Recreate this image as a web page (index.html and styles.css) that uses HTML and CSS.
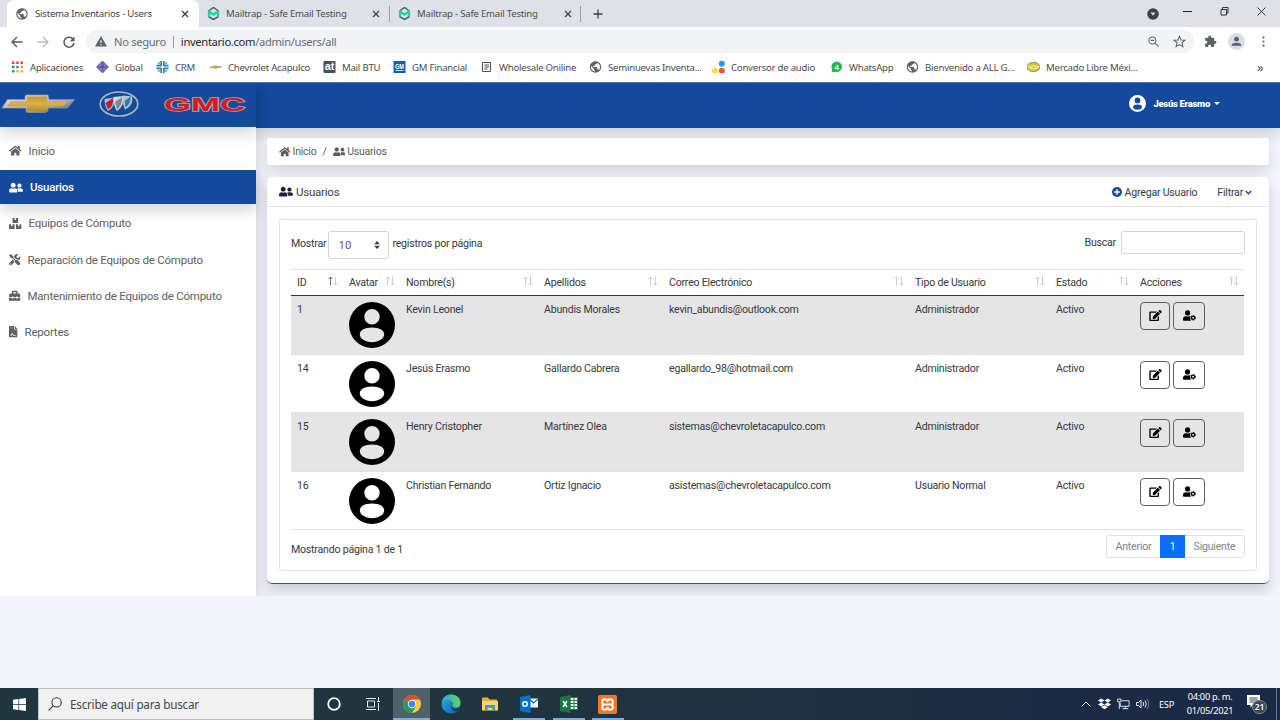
FILE: index.html
```html
<!DOCTYPE html>
<html lang="es">
<head>
<meta charset="utf-8">
<title>Sistema Inventarios - Users</title>
<link rel="stylesheet" href="styles.css">
</head>
<body>
<svg class="defs" aria-hidden="true">
<defs>
<linearGradient id="gold" x1="0" y1="0" x2="0" y2="1"><stop offset="0" stop-color="#c79a35"/><stop offset=".5" stop-color="#d9b04c"/><stop offset="1" stop-color="#b98c2c"/></linearGradient>
<linearGradient id="silver" x1="0" y1="0" x2="1" y2="1"><stop offset="0" stop-color="#e8eaec"/><stop offset=".6" stop-color="#a9afb5"/><stop offset="1" stop-color="#4c535c"/></linearGradient>
<linearGradient id="edge" x1="0" y1="0" x2="1" y2="1"><stop offset="0" stop-color="#2fb4e8"/><stop offset="1" stop-color="#0a55ad"/></linearGradient>
<linearGradient id="edgetop" x1="0" y1="0" x2="1" y2="0"><stop offset="0" stop-color="#2aa9e0"/><stop offset="1" stop-color="#62d35b"/></linearGradient>
</defs>
<symbol id="home" viewBox="0 0 576 512"><path d="M280.37 148.26L96 300.11V464a16 16 0 0 0 16 16l112.06-.29a16 16 0 0 0 15.92-16V368a16 16 0 0 1 16-16h64a16 16 0 0 1 16 16v95.64a16 16 0 0 0 16 16.05L464 480a16 16 0 0 0 16-16V300L295.67 148.26a12.19 12.19 0 0 0-15.3 0zM571.6 251.47L488 182.56V44.05a12 12 0 0 0-12-12h-56a12 12 0 0 0-12 12v72.61L318.47 43a48 48 0 0 0-61 0L4.34 251.47a12 12 0 0 0-1.6 16.9l25.5 31A12 12 0 0 0 45.15 301l235.22-193.74a12.19 12.19 0 0 1 15.3 0L530.9 301a12 12 0 0 0 16.9-1.6l25.5-31a12 12 0 0 0-1.7-16.93z"/></symbol>
<symbol id="users" viewBox="0 0 640 512"><path d="M192 256c61.9 0 112-50.1 112-112S253.9 32 192 32 80 82.1 80 144s50.1 112 112 112zm76.8 32h-8.3c-20.8 10-43.9 16-68.5 16s-47.6-6-68.5-16h-8.3C51.6 288 0 339.6 0 403.2V432c0 26.5 21.5 48 48 48h288c26.5 0 48-21.5 48-48v-28.8c0-63.6-51.6-115.2-115.2-115.2zM480 256c53 0 96-43 96-96s-43-96-96-96-96 43-96 96 43 96 96 96zm48 32h-3.8c-13.9 4.8-28.6 8-44.2 8s-30.3-3.2-44.2-8H432c-20.4 0-39.2 5.9-55.7 15.4 24.4 26.3 39.7 61.2 39.7 99.8v38.4c0 2.2-.5 4.3-.6 6.4H592c26.5 0 48-21.5 48-48 0-61.9-50.1-112-112-112z"/></symbol>
<symbol id="boxes" viewBox="0 0 576 512"><path d="M560 288h-80v96l-32-21.3-32 21.3v-96h-80c-8.8 0-16 7.2-16 16v192c0 8.8 7.2 16 16 16h224c8.8 0 16-7.2 16-16V304c0-8.8-7.2-16-16-16zm-384-64h224c8.8 0 16-7.2 16-16V16c0-8.8-7.2-16-16-16h-80v96l-32-21.3L256 96V0h-80c-8.8 0-16 7.2-16 16v192c0 8.8 7.2 16 16 16zm64 64h-80v96l-32-21.3L96 384v-96H16c-8.8 0-16 7.2-16 16v192c0 8.8 7.2 16 16 16h224c8.8 0 16-7.2 16-16V304c0-8.8-7.2-16-16-16z"/></symbol>
<symbol id="tools" viewBox="0 0 512 512"><path d="M501.1 395.7L384 278.6c-23.1-23.1-57.6-27.6-85.4-13.9L192 158.1V96L64 0 0 64l96 128h62.1l106.6 106.6c-13.6 27.8-9.2 62.3 13.9 85.4l117.1 117.1c14.6 14.6 38.2 14.6 52.7 0l52.7-52.7c14.5-14.6 14.5-38.2 0-52.7zM331.7 225c28.3 0 54.9 11 74.9 31l19.4 19.4c15.8-6.9 30.8-16.5 43.8-29.5 37.1-37.1 49.7-89.3 37.9-136.7-2.2-9-13.5-12.1-20.1-5.5l-74.4 74.4-67.9-11.3L334 98.900l74.400-74.400c6.600-6.600 3.400-17.900-5.700-20.200-47.400-11.700-99.600.900-136.600 37.900-28.500 28.500-41.900 66.100-41.200 103.600l82.100 82.100c8.100-1.900 16.500-2.900 24.700-2.900zm-103.900 82l-56.700-56.700L18.700 402.800c-25 25-25 65.500 0 90.500s65.500 25 90.500 0l123.600-123.600c-7.600-19.900-9.900-41.600-5-62.700zM64 472c-13.200 0-24-10.800-24-24 0-13.300 10.700-24 24-24s24 10.700 24 24c0 13.200-10.700 24-24 24z"/></symbol>
<symbol id="toolbox" viewBox="0 0 512 512"><path d="M502.63 214.63l-45.25-45.25c-6-6-14.14-9.37-22.63-9.37H384V80c0-26.51-21.49-48-48-48H176c-26.51 0-48 21.49-48 48v80H77.25c-8.49 0-16.62 3.37-22.63 9.37L9.37 214.63c-6 6-9.37 14.14-9.37 22.63V320h128v-16c0-8.84 7.16-16 16-16h32c8.84 0 16 7.16 16 16v16h128v-16c0-8.84 7.16-16 16-16h32c8.84 0 16 7.16 16 16v16h128v-82.75c0-8.48-3.37-16.62-9.37-22.62zM320 160H192V96h128v64zm64 208c0 8.84-7.16 16-16 16h-32c-8.84 0-16-7.16-16-16v-16H192v16c0 8.84-7.16 16-16 16h-32c-8.84 0-16-7.16-16-16v-16H0v96c0 17.67 14.33 32 32 32h448c17.67 0 32-14.33 32-32v-96H384v16z"/></symbol>
<symbol id="report" viewBox="0 0 384 512"><path fill-rule="evenodd" d="M24 0h200v136c0 13 11 24 24 24h136v328c0 13-11 24-24 24H24c-13 0-24-11-24-24V24C0 11 11 0 24 0zM256 0l128 128H256zM64 72v32h80V72zM64 408v32h50l40-60 24 46c8 16 32 16 42 2 10 10 20 12 46 12h54v-32h-64c-20-4-20-22-44-22-14 0-20 4-26 6l-26-62c-6-18-28-18-36 0l-40 78z"/></symbol>
<symbol id="edit" viewBox="0 0 576 512"><path d="M402.6 83.2l90.2 90.2c3.8 3.8 3.8 10 0 13.8L274.4 405.6l-92.8 10.3c-12.4 1.4-22.9-9.1-21.5-21.5l10.3-92.8L388.8 83.2c3.8-3.8 10-3.8 13.8 0zm162-22.9l-48.8-48.8c-15.2-15.2-39.9-15.2-55.2 0l-35.4 35.4c-3.8 3.8-3.8 10 0 13.8l90.2 90.2c3.8 3.8 10 3.8 13.8 0l35.4-35.4c15.2-15.3 15.2-40 0-55.2zM384 346.2V448H64V128h229.8c3.2 0 6.2-1.3 8.5-3.5l40-40c7.6-7.6 2.2-20.5-8.5-20.5H48C21.5 64 0 85.5 0 112v352c0 26.5 21.5 48 48 48h352c26.5 0 48-21.5 48-48V306.2c0-10.7-12.9-16-20.5-8.5l-40 40c-2.2 2.3-3.5 5.3-3.5 8.5z"/></symbol>
<symbol id="usercog" viewBox="0 0 640 512"><circle cx="224" cy="128" r="128"/><path d="M134 288C60 288 0 348 0 422v42c0 27 22 48 48 48h350c-30-30-50-70-48-120 0-30 8-60 26-88-18-10-40-16-62-16h-17c-46 21-100 21-146 0z"/><circle cx="497" cy="368" r="76" fill="none" stroke="currentColor" stroke-width="62"/><circle cx="497" cy="368" r="116" fill="none" stroke="currentColor" stroke-width="44" stroke-dasharray="61 60.5"/></symbol>
<symbol id="avatar" viewBox="0 0 46 46"><path fill-rule="evenodd" d="M23 0a23 23 0 1 0 0 46 23 23 0 0 0 0-46zM23 7a7.700 7.700 0 1 1 0 15.400 7.700 7.700 0 0 1 0-15.400zM23 25.500c8 0 12.200 3 12.200 7 0 3.900-5.400 7.700-12.200 7.700S10.800 36.400 10.800 32.500c0-4 4.200-7 12.200-7z"/></symbol>
<symbol id="globe" viewBox="1.500 1.500 21 21"><path fill="#5f6368" d="M12 2C6.480 2 2 6.480 2 12s4.480 10 10 10 10-4.480 10-10S17.520 2 12 2zm-1 17.930c-3.950-.49-7-3.850-7-7.930 0-.62.08-1.210.21-1.790L9 15v1c0 1.100.9 2 2 2v1.930zm6.900-2.540c-.26-.81-1-1.390-1.900-1.390h-1v-3c0-.55-.45-1-1-1H8v-2h2c.55 0 1-.45 1-1V7h2c1.100 0 2-.9 2-2v-.41c2.930 1.190 5 4.060 5 7.410 0 2.080-.8 3.970-2.100 5.390z"/></symbol>
<symbol id="mailtrap" viewBox="0 0 26 26"><path d="M3 8L13 1l10 7M3 19l10 6 10-6" fill="none" stroke="#4e5f73" stroke-width="3"/><path d="M4 19V9l9 6 9-6v10" fill="none" stroke="#25d0a1" stroke-width="4.500" stroke-linejoin="round"/></symbol>
<symbol id="close" viewBox="0 0 8 8"><path d="M1 1l6 6M7 1L1 7" fill="none" stroke="currentColor" stroke-width="1.300"/></symbol>
<symbol id="bowtie" viewBox="0 0 74 20"><path d="M6.500 5.500H24V2.500q0-1.500 2-1.500H47l1 4.500H73.500L66.500 14H47v2.500q-1 2-3 2H27q-2 0-2-2V14H1z" fill="url(#silver)" stroke="#9a9583" stroke-width=".7"/><path d="M10 7.300H26V2.500H46V7.300H67L62 12.300H45.500V17H26V12.300H5.500z" fill="url(#gold)"/></symbol>
<symbol id="sort" viewBox="0 0 10 10"><path d="M7.500 .5V9M5.500 7l2 2 2-2M2.500 9.500V1M.5 3l2-2 2 2" fill="none"/></symbol>
<symbol id="sortasc" viewBox="0 0 10 10"><path d="M7.500 .5V9M5.500 7l2 2 2-2" fill="none"/><path d="M2.500 9.500V1M.5 3l2-2 2 2" fill="none" stroke="#55595d"/></symbol>
</svg>

<header class="tabs">
  <div class="tab active"><svg class="i12"><use href="#globe"/></svg><span>Sistema Inventarios - Users</span><svg class="x"><use href="#close"/></svg></div>
  <div class="tab"><svg class="i13"><use href="#mailtrap"/></svg><span>Mailtrap - Safe Email Testing</span><svg class="x"><use href="#close"/></svg></div>
  <div class="tab"><svg class="i13"><use href="#mailtrap"/></svg><span>Mailtrap - Safe Email Testing</span><svg class="x"><use href="#close"/></svg></div>
  <svg class="plus" viewBox="0 0 10 10"><path d="M5 .5v9M.5 5h9" stroke="#3c4043" stroke-width="1.300"/></svg>
  <div class="winctl">
    <svg class="i12" viewBox="0 0 12 12"><circle cx="6" cy="6" r="5.800" fill="#3c4043"/><path d="M3.500 4.500h5L6 7.700z" fill="#dee1e6"/></svg>
    <svg class="wb" viewBox="0 0 9 9"><path d="M0 4.500h9" stroke="#222" /></svg>
    <svg class="wb" viewBox="0 0 9 9"><path d="M1 2.500h5.500v5.500H1zM2.500 2.500v-2H8v5.500H6.500" fill="none" stroke="#222" stroke-width=".9"/></svg>
    <svg class="wb" viewBox="0 0 9 9"><path d="M.5.500l8 8M8.500.500l-8 8" stroke="#222" stroke-width=".9"/></svg>
  </div>
</header>

<div class="toolbar">
  <svg class="nav" viewBox="0 0 12 12"><path d="M11.500 6H1M6 1L1 6l5 5" fill="none" stroke="#55595d" stroke-width="1.400"/></svg>
  <svg class="nav" viewBox="0 0 12 12"><path d="M.5 6H11M6 1l5 5-5 5" fill="none" stroke="#b9bcbf" stroke-width="1.400"/></svg>
  <svg class="nav" viewBox="0 0 12 12"><path d="M10.300 3.500A5 5 0 1 0 11 7" fill="none" stroke="#55595d" stroke-width="1.500"/><path d="M11.500.500v4.700H6.800z" fill="#55595d"/></svg>
  <div class="omnibox">
    <svg class="warn" viewBox="0 0 12 11"><path d="M6 0l6 10.500H0z" fill="#5f6368"/><path d="M6 4v3M6 8v1.200" stroke="#f1f3f4" stroke-width="1.100"/></svg>
    <span class="insecure">No seguro</span><span class="url"><b>inventario.com</b>/admin/users/all</span>
    <svg class="mag" viewBox="0 0 12 12"><circle cx="4.800" cy="4.800" r="3.800" fill="none" stroke="#5f6368" stroke-width="1.100"/><path d="M3 4.800h3.600M7.800 7.800l3.700 3.700" stroke="#5f6368" stroke-width="1.200"/></svg>
    <svg class="star" viewBox="0 0 24 24"><path d="M12 2.500l2.900 6.600 7.100.6-5.400 4.700 1.600 7-6.200-3.700-6.200 3.700 1.600-7L2 9.700l7.100-.6z" fill="none" stroke="#5f6368" stroke-width="2"/></svg>
  </div>
  <svg class="puzzle" viewBox="0 0 24 24"><path fill="#5f6368" d="M20.500 11H19V7a2 2 0 0 0-2-2h-4V3.500a2.500 2.500 0 0 0-5 0V5H4a2 2 0 0 0-2 2v3.800h1.500a2.700 2.700 0 0 1 0 5.400H2V20c0 1.100.9 2 2 2h3.800v-1.500a2.700 2.700 0 0 1 5.400 0V22H17a2 2 0 0 0 2-2v-4h1.500a2.500 2.500 0 0 0 0-5z"/></svg>
  <svg class="prof" viewBox="0 0 18 18"><circle cx="9" cy="9" r="9" fill="#d9dde4"/><circle cx="9" cy="6.500" r="2.600" fill="#56627a"/><path d="M4 13.500v-1c0-3 10-3 10 0v1z" fill="#56627a"/></svg>
  <svg class="dots" viewBox="0 0 3 12"><g fill="#5f6368"><circle cx="1.500" cy="1.500" r="1.200"/><circle cx="1.500" cy="6" r="1.200"/><circle cx="1.500" cy="10.500" r="1.200"/></g></svg>
</div>

<nav class="bookmarks">
  <div><svg viewBox="0 0 12 12"><g><path d="M.5.500h2.500v2.500H.5zM4.700.500h2.500v2.500H4.700zM9 .5h2.500v2.500H9z" fill="#e0463a"/><path d="M.5 4.800h2.500v2.500H.5z" fill="#2a9d4a"/><path d="M4.700 4.800h2.500v2.500H4.700z" fill="#3f79e0"/><path d="M9 4.800h2.500v2.500H9z" fill="#e9a820"/><path d="M.5 9h2.500v2.500H.5z" fill="#2a9d4a"/><path d="M4.700 9h2.500v2.500H4.700zM9 9h2.500v2.500H9z" fill="#e9b53a"/></g></svg><span>Aplicaciones</span></div>
  <div><svg viewBox="0 0 12 12"><path d="M6-.5L12.500 6 6 12.500-.5 6z" fill="#6b66b5"/><path d="M3 3.500l5.500 5.500M9 3.500L3.500 9" stroke="#b9b6e0" stroke-width=".7"/><path d="M6 4l2 2-2 2-2-2z" fill="#4f4a9c"/></svg><span>Global</span></div>
  <div><svg viewBox="0 0 12 12"><g fill="#317fa6"><path d="M3.800 0h1.700v5H3.800zM6.500 0h1.700v5H6.500zM3.800 7h1.700v5H3.800zM6.500 7h1.700v5H6.500zM0 3.800h5v1.700H0zM0 6.500h5v1.700H0zM7 3.800h5v1.700H7zM7 6.500h5v1.700H7z"/><path d="M1.300 1.300h2v2h-2zM8.700 1.300h2v2h-2zM1.300 8.700h2v2h-2zM8.700 8.700h2v2h-2z" opacity=".7"/></g></svg><span>CRM</span></div>
  <div><svg viewBox="0 0 74 20"><use href="#bowtie"/></svg><span>Chevrolet Acapulco</span></div>
  <div><svg viewBox="0 0 12 12"><rect width="12" height="12" rx="1" fill="#43505a"/><text x="1.200" y="9.300" font-size="10" font-weight="700" fill="#fff" textLength="9.600" lengthAdjust="spacingAndGlyphs">at</text></svg><span>Mail BTU</span></div>
  <div><svg viewBox="0 0 12 12"><rect width="12" height="12" fill="#1361ae"/><text x="1.500" y="8" font-size="7" font-weight="700" fill="#fff" textLength="9" lengthAdjust="spacingAndGlyphs">GM</text><path d="M2 9.500h8" stroke="#fff" stroke-width=".8"/></svg><span>GM Financial</span></div>
  <div><svg viewBox="0 0 12 12"><path d="M2 1.500h8v9H2zM4 4h4.500M4 6h4.500M4 8h3" fill="none" stroke="#4a4d51"/></svg><span>Wholesale Oniline</span></div>
  <div><svg viewBox="0 0 12 12"><use href="#globe"/></svg><span>Seminuevas Inventa...</span></div>
  <div><svg viewBox="0 0 12 12"><circle cx="9.300" cy="2.700" r="3" fill="#1b9fe0"/><circle cx="2.500" cy="9.700" r="2.900" fill="#f9d949"/><circle cx="9.300" cy="9.700" r="3" fill="#ef5a33"/></svg><span>Conversor de audio</span></div>
  <div><svg viewBox="0 0 12 12"><circle cx="6.200" cy="5.800" r="5.300" fill="#1fba4c"/><path d="M1 11.500l1-4 3 3z" fill="#1fba4c"/><text x="4" y="8.800" font-size="8" font-weight="700" fill="#fff">4</text></svg><span>WhatsApp</span></div>
  <div><svg viewBox="0 0 12 12"><use href="#globe"/></svg><span>Bienvenido a ALL G...</span></div>
  <div><svg viewBox="0 0 12 12"><ellipse cx="6" cy="6" rx="6.500" ry="4.600" fill="#d9c63a" stroke="#82783b" stroke-width=".8"/><path d="M0 5.500q3 2 6-1 3 3 6 1M3 8q2-1.500 3 0 1.500-1.500 3-.5" fill="none" stroke="#fff" stroke-width=".8"/></svg><span>Mercado Libre Méxi...</span></div>
  <div class="more">»</div>
</nav>

<div class="app">
  <aside class="sidebar">
    <div class="brand">
      <svg class="chevy"><use href="#bowtie"/></svg>
      <svg class="buick" viewBox="0 0 40 26"><ellipse cx="20" cy="13" rx="18.800" ry="12" fill="none" stroke="#aeb6c2" stroke-width="1.600"/><path d="M5.500 8l10-1.500c1 6-2 11-6.500 13.500C6.500 17 5.500 13 5.500 8z" fill="#b7bcc3"/><path d="M6.500 12l7.500-5c.5 6-1 9-5 11.500z" fill="#b52335"/><path d="M14.500 6l10-1c1 6-2 12-6.500 15-2.500-3-3.500-8-3.500-14z" fill="#d3d6da"/><path d="M16 11l7-5c.5 6-2 10-5 12.500z" fill="#7f8894"/><path d="M24 4.500l9 1c1.500 6-2 11-7 13-2-4-2.500-9-2-14z" fill="#bcc3cb"/><path d="M25.500 10l6-4.500c.5 5-1.500 8.500-5 11z" fill="#3479ad"/></svg>
      <svg class="gmc" viewBox="0 0 84 24"><text x="1" y="18.800" font-size="18.500" font-weight="700" textLength="81" lengthAdjust="spacingAndGlyphs" fill="#cf1a25" stroke="#b99aa5" stroke-width="1.500" paint-order="stroke">GMC</text></svg>
    </div>
    <ul class="menu">
      <li><svg class="w13"><use href="#home"/></svg>Inicio</li>
      <li class="on"><svg class="w14"><use href="#users"/></svg>Usuarios</li>
      <li><svg class="w13"><use href="#boxes"/></svg>Equipos de Cómputo</li>
      <li><svg class="w12"><use href="#tools"/></svg>Reparación de Equipos de Cómputo</li>
      <li><svg class="w12"><use href="#toolbox"/></svg>Mantenimiento de Equipos de Cómputo</li>
      <li><svg class="w9"><use href="#report"/></svg>Reportes</li>
    </ul>
  </aside>
  <main class="main">
    <div class="topbar"><svg viewBox="0 0 46 46"><use href="#avatar"/></svg><b>Jesús Erasmo</b><i class="caret"></i></div>
    <div class="content">
      <div class="crumbs"><svg class="w12"><use href="#home"/></svg><span>Inicio</span><em>/</em><svg class="w13"><use href="#users"/></svg><span>Usuarios</span></div>
      <section class="card">
        <div class="card-head">
          <svg class="w14"><use href="#users"/></svg><h1>Usuarios</h1>
          <svg class="add" viewBox="0 0 10 10"><circle cx="5" cy="5" r="5" fill="#174a9b"/><path d="M5 2.200v5.600M2.200 5h5.600" stroke="#fff" stroke-width="1.500"/></svg><a>Agregar Usuario</a><a class="filter">Filtrar</a><svg class="chev" viewBox="0 0 7 5"><path d="M.8 1l2.700 2.700L6.200 1" fill="none" stroke="#174a9b" stroke-width="1.500"/></svg>
        </div>
        <div class="panel">
          <div class="controls"><span>Mostrar</span><div class="select">10<svg viewBox="0 0 6 8"><path d="M3 0l2.800 3.300H.2zM3 8L.2 4.700h5.600z" fill="#343a40"/></svg></div><span>registros por página</span><span class="search-l">Buscar</span><div class="search"></div></div>
          <table>
            <colgroup><col class="c1"><col class="c2"><col class="c3"><col class="c4"><col class="c5"><col class="c6"><col class="c7"><col class="c8"></colgroup>
            <thead><tr>
              <th><div>ID<svg><use href="#sortasc"/></svg></div></th><th><div>Avatar<svg><use href="#sort"/></svg></div></th><th><div>Nombre(s)<svg><use href="#sort"/></svg></div></th><th><div>Apellidos<svg><use href="#sort"/></svg></div></th><th><div>Correo Electrónico<svg><use href="#sort"/></svg></div></th><th><div>Tipo de Usuario<svg><use href="#sort"/></svg></div></th><th><div>Estado<svg><use href="#sort"/></svg></div></th><th><div>Acciones<svg><use href="#sort"/></svg></div></th>
            </tr></thead>
            <tbody>
              <tr><td>1</td><td><svg class="av"><use href="#avatar"/></svg></td><td>Kevin Leonel</td><td>Abundis Morales</td><td>kevin_abundis@outlook.com</td><td>Administrador</td><td>Activo</td><td><div class="acts"><button><svg><use href="#edit"/></svg></button><button class="cog"><svg><use href="#usercog"/></svg></button></div></td></tr>
              <tr><td>14</td><td><svg class="av"><use href="#avatar"/></svg></td><td>Jesús Erasmo</td><td>Gallardo Cabrera</td><td>egallardo_98@hotmail.com</td><td>Administrador</td><td>Activo</td><td><div class="acts"><button><svg><use href="#edit"/></svg></button><button class="cog"><svg><use href="#usercog"/></svg></button></div></td></tr>
              <tr><td>15</td><td><svg class="av"><use href="#avatar"/></svg></td><td>Henry Cristopher</td><td>Martínez Olea</td><td>sistemas@chevroletacapulco.com</td><td>Administrador</td><td>Activo</td><td><div class="acts"><button><svg><use href="#edit"/></svg></button><button class="cog"><svg><use href="#usercog"/></svg></button></div></td></tr>
              <tr><td>16</td><td><svg class="av"><use href="#avatar"/></svg></td><td>Christian Fernando</td><td>Ortiz Ignacio</td><td>asistemas@chevroletacapulco.com</td><td>Usuario Normal</td><td>Activo</td><td><div class="acts"><button><svg><use href="#edit"/></svg></button><button class="cog"><svg><use href="#usercog"/></svg></button></div></td></tr>
            </tbody>
          </table>
          <div class="foot"><span>Mostrando página 1 de 1</span><div class="pager"><span class="prev">Anterior</span><span class="cur">1</span><span class="next">Siguiente</span></div></div>
        </div>
      </section>
    </div>
  </main>
</div>

<footer class="taskbar">
  <div class="start"><svg viewBox="0 0 13 13"><path d="M0 1.800L5.500 1v5.200H0zM6.200.9L13 0v6.200H6.200zM0 6.900h5.500v5.200L0 11.300zM6.200 6.900H13V13l-6.800-.9z" fill="#fff"/></svg></div>
  <div class="find"><svg viewBox="0 0 13 13"><circle cx="8" cy="5" r="4.300" fill="none" stroke="#333"/><path d="M5 8L.5 12.500" stroke="#333"/></svg><span>Escribe aquí para buscar</span></div>
  <div class="apps">
    <div><svg class="s14" viewBox="0 0 14 14"><circle cx="7" cy="7" r="5.800" fill="none" stroke="#fff" stroke-width="1.800"/></svg></div>
    <div><svg class="s14" viewBox="0 0 14 14"><path d="M1.500 4h7v6h-7zM0 1.500h10M0 12.500h10M12.500 0v4M12.500 6v8M11 4.500h3" fill="none" stroke="#e8ecee"/></svg></div>
    <div class="active"><svg class="s18" viewBox="0 0 18 18"><circle cx="9" cy="9" r="9" fill="#f9cd3d"/><path d="M9 9L1.200 4.500A9 9 0 0 1 16.800 4.500H9z" fill="#df4937"/><path d="M9 9L1.200 4.500A9 9 0 0 0 9 18l4-7z" fill="#249d58"/><circle cx="9" cy="9" r="4.200" fill="#fff"/><circle cx="9" cy="9" r="3.300" fill="#4486ef"/></svg></div>
    <div><svg class="s20" viewBox="0 0 20 20"><circle cx="10" cy="10" r="9.500" fill="url(#edge)"/><path d="M.8 8C2 3 6 .5 10.500.5 16 .5 19.500 4.500 19.500 9c0 3-2 4.500-5 4.500-2.500 0-3.500-1-2.500-2.500 1.500-4-6-8-11.200-3z" fill="url(#edgetop)"/><path d="M11 12c0 3 4 3.500 8 1.500l-1.500 3C14 18 9 16 11 12z" fill="#20364a"/></svg></div>
    <div><svg class="s18" viewBox="0 0 18 18"><path d="M1 2.500h6l1.500 2H16v10H1z" fill="#e9ac31"/><path d="M1 6h16v9.500H1z" fill="#fbd566"/><path d="M4 15.500V10h10v5.500h-2.500v-2.800h-5v2.800z" fill="#4293cf"/></svg></div>
    <div class="run"><svg class="s18" viewBox="0 0 18 18"><path d="M9 3.500h9v9H9z" fill="#e9f2fa"/><path d="M9 4l4.500 4L18 4" fill="none" stroke="#1170bd" stroke-width="1.300"/><path d="M0 2l10.500-2v18L0 16z" fill="#0870c4"/><circle cx="5" cy="9" r="2.300" fill="none" stroke="#fff" stroke-width="1.500"/></svg></div>
    <div class="run"><svg class="s18" viewBox="0 0 18 18"><path d="M10 2.500h7.500v12H10z" fill="#f1f6f3" stroke="#267b4c"/><path d="M10 5.500h7.500M10 8.500h7.500M10 11.500h7.500M14 3v11.500" stroke="#267b4c"/><path d="M0 2l10.500-2v18L0 16z" fill="#207346"/><path d="M3 6l4 6M7 6l-4 6" stroke="#fff" stroke-width="1.400"/></svg></div>
    <div class="run"><svg class="s19" viewBox="0 0 20 20"><rect width="20" height="20" rx="2" fill="#ee7a28"/><path d="M7 10C3.500 10 3.500 4.500 7 4.500c2 0 3 1.500 3 2.800 0-1.300 1-2.800 3-2.800 3.500 0 3.500 5.500 0 5.500 3.500 0 3.500 5.500 0 5.500-2 0-3-1.500-3-2.800 0 1.300-1 2.800-3 2.800C3.500 15.500 3.500 10 7 10zM7.500 10h5" fill="none" stroke="#fff" stroke-width="2"/></svg></div>
  </div>
  <div class="tray">
    <svg class="up" viewBox="0 0 10 6"><path d="M.7 5.300L5 1l4.300 4.300" fill="none" stroke="#fff"/></svg>
    <svg class="drop" viewBox="0 0 14 12"><path d="M3.500 0L7 2.200 3.500 4.400 0 2.200zM10.500 0L14 2.200l-3.500 2.200L7 2.200zM3.500 4.400L7 6.600 3.500 8.800 0 6.600zM10.500 4.400L14 6.600l-3.500 2.200L7 6.600zM3.500 9.500L7 7.300l3.500 2.200L7 11.700z" fill="#fff"/></svg>
    <svg class="net" viewBox="0 0 14 12"><path d="M5 2.500h8v6H3.500V5M6 11h6M9 8.500V11M.7.700h3.600v3H.7zM2.500 4v7.500" fill="none" stroke="#fff" stroke-width=".9"/></svg>
    <svg class="vol" viewBox="0 0 13 12"><path d="M.5 4.500h2L5 2v8L2.500 7.500h-2zM7 4q1.500 2 0 4M9 2.500q2.500 3.500 0 7" fill="none" stroke="#fff" stroke-width=".9"/><path d="M11 1q3.500 5 0 10" fill="none" stroke="#8a95a6" stroke-width=".8"/></svg>
    <span class="lang">ESP</span>
    <span class="clock">04:00 p. m.<br>01/05/2021</span>
    <div class="notif"><svg viewBox="0 0 14 13"><path d="M0 0h13v10H6l-2.500 2.500V10H0z" fill="#fff"/><path d="M2.500 3h8M2.500 5h8M2.500 7h5" stroke="#1d2c42" stroke-width=".9"/></svg><b>21</b></div>
  </div>
</footer>
</body>
</html>
```
FILE: styles.css
```css
* { box-sizing: border-box; }
body { margin: 0; width: 1280px; height: 720px; overflow: hidden; background: #f4f5fa; font-family: "Noto Sans", "Open Sans", sans-serif; display: flex; flex-direction: column; }
svg { display: block; flex: none; fill: currentColor; }
svg text { font-family: "Liberation Sans", Arial, sans-serif; letter-spacing: 0; }
.defs { position: absolute; width: 0; height: 0; }
.i12 { width: 12px; height: 12px; }
.i13 { width: 13px; height: 13px; }

/* browser tabs */
.tabs { height: 27px; background: #dee1e6; display: flex; align-items: center; padding-left: 7px; flex: none; font-size: 9.600px; letter-spacing: -.22px; color: #4a4d51; }
.tab { width: 191px; height: 27px; display: flex; align-items: center; padding: 0 9px 0 8px; white-space: nowrap; }
.tab span { margin-left: 6px; }
.tab .x { width: 8px; height: 8px; margin-left: auto; color: #3c4043; }
.tab:nth-child(2) { width: 191px; padding-right: 9px; }
.tab:nth-child(3) { padding-right: 8px; }
.tab:not(.active) { border-right: 1px solid #9b9ea3; height: 16px; }
.tab.active { background: #fff; border-radius: 7px 7px 0 0; color: #3f4245; width: 192px; padding-left: 9px; padding-right: 10px; }
.tab.active span { margin-left: 7px; }
.plus { width: 10px; height: 10px; margin-left: 12px; }
.winctl { margin-left: auto; display: flex; align-items: center; padding-right: 14px; gap: 28px; }
.winctl .i12 { margin-right: -4px; }
.winctl .wb { width: 9px; height: 9px; margin-top: -4px; }

/* toolbar */
.toolbar { height: 29px; flex: none; background: #fff; display: flex; align-items: center; padding-left: 11px; }
.nav { width: 12px; height: 12px; margin-right: 14px; }
.omnibox { width: 1108px; height: 23px; border-radius: 12px; background: #f1f3f4; margin-left: -3px; display: flex; align-items: center; padding-left: 9px; font-size: 11.200px; letter-spacing: -.33px; color: #6a6d72; white-space: nowrap; }
.warn { width: 12px; height: 11px; }
.insecure { margin-left: 7px; padding-right: 7px; border-right: 1px solid #9a9da1; line-height: 12px; }
.url { margin-left: 7px; color: #6a6d72; }
.url b { font-weight: 400; color: #25282b; }
.mag { width: 11px; height: 11px; margin-left: auto; }
.star { width: 13px; height: 13px; margin: 0 8px 0 14px; }
.puzzle { width: 13px; height: 13px; margin-left: 10px; }
.prof { width: 17px; height: 17px; margin-left: 11px; }
.dots { width: 3px; height: 11px; margin-left: 17px; }

/* bookmarks */
.bookmarks { height: 26px; flex: none; background: #fff; display: grid; grid-template-columns: 85px 60px 53px 114px 70px 87px 109px 123px 118px 76px 121px 230px 24px; padding: 0 0 4px 11px; align-items: center; font-size: 9.600px; letter-spacing: -.23px; color: #4a4d51; white-space: nowrap; }
.bookmarks div { display: flex; align-items: center; }
.bookmarks svg { width: 13px; height: 12px; margin-right: 6px; }
.bookmarks .more { font-size: 13px; }

/* application */
.app { height: 514px; flex: none; display: flex; overflow: hidden; font-family: Roboto, "Noto Sans", sans-serif; letter-spacing: -.22px; color: #36393d; }
.sidebar { width: 256px; flex: none; background: #fff; position: relative; z-index: 2; box-shadow: 0 7px 14px rgba(0,0,0,.16); }
.brand { height: 45px; background: #134a9c; display: flex; align-items: center; padding-left: 1px; padding-bottom: 2px; border-top: 1px solid #5577a9; box-shadow: 0 7px 14px rgba(0,0,0,.16); }
.chevy { width: 74px; height: 20px; }
.buick { width: 40px; height: 26px; margin-left: 24px; }
.gmc { width: 84px; height: 24px; margin-left: 24px; }
.menu { list-style: none; margin: 7px 0 0; padding: 0; font-size: 11.500px; color: #606060; }
.menu li { height: 34px; margin-bottom: 2.200px; display: flex; align-items: center; padding-left: 9px; white-space: nowrap; }
.menu svg { margin-right: 7px; }
.menu .on { background: #134a9c; color: #fff; font-weight: 500; box-shadow: 0 7px 14px rgba(0,0,0,.16); }
.w14 { width: 14px; height: 11.200px; }
.w13 { width: 12.600px; height: 11.200px; }
.w12 { width: 11.500px; height: 11.500px; }
.w9 { width: 8.600px; height: 11.500px; }
.main { flex: 1; display: flex; flex-direction: column; min-width: 0; }
.topbar { height: 46px; flex: none; background: #134a9c; border-top: 1px solid #5577a9; color: #fff; display: flex; align-items: center; justify-content: flex-end; padding: 0 60px 4px 0; font-size: 9.500px; box-shadow: 0 7px 14px rgba(0,0,0,.16); }
.topbar svg { width: 17px; height: 17px; margin-right: 7px; }
.topbar b { font-weight: 900; letter-spacing: -.3px; }
.caret { border: 3px solid transparent; border-top: 3px solid #fff; border-bottom: 0; margin-left: 4px; }
.content { padding: 10px 11px 0; display: flex; flex-direction: column; gap: 12px; }
.crumbs { height: 27px; background: #fff; border-radius: 3px; box-shadow: 0 7px 14px rgba(0,0,0,.13); display: flex; align-items: center; padding-left: 12px; font-size: 10.500px; color: #5c5c5c; }
.crumbs span { margin-left: 2px; }
.crumbs em { font-style: normal; margin: 0 6px; }
.card { background: #fff; height: 407px; border-radius: 5px; border-bottom: 1.500px solid #2f5585; box-shadow: 0 7px 14px rgba(0,0,0,.16); }
.card-head { height: 30px; border-bottom: 1px solid #e3e5e8; display: flex; align-items: center; padding: 1px 17px 0 12px; font-size: 10.600px; }
.card-head > .w14 { color: #1b2140; }
.card-head h1 { margin: 0 auto 0 3px; font-size: 11.500px; font-weight: 400; color: #3d3f55; }
.add { width: 10px; height: 10px; margin-right: 3px; }
.filter { margin-left: 20px; }
.chev { width: 7px; height: 5px; margin-left: 2px; }
.panel { margin: 12px 12px 0; height: 352px; border: 1px solid #dfe1e4; border-radius: 3px; padding: 11px 11px 0; font-size: 10.600px; }
.controls { height: 38px; display: flex; align-items: flex-start; }
.controls > span { line-height: 26px; }
.select { width: 61px; height: 28px; border: 1px solid #ced4da; border-radius: 3px; margin: 0 3px 0 2px; padding: 0 8px 0 9px; display: flex; align-items: center; justify-content: space-between; font-size: 11.500px; letter-spacing: 0; color: #5a6068; }
.select svg { width: 6px; height: 8px; }
.search-l { margin-left: auto; line-height: 23px !important; }
.search { width: 124px; height: 23px; border: 1px solid #ced4da; border-radius: 3px; margin-left: 5px; }
table { width: 953px; table-layout: fixed; border-collapse: separate; border-spacing: 0; }
.c1 { width: 52px; } .c2 { width: 57px; } .c3 { width: 138px; } .c4 { width: 125px; } .c5 { width: 246px; } .c6 { width: 141px; } .c7 { width: 84px; } .c8 { width: 110px; }
th { height: 27px; padding: 0 5px 0 6px; font-weight: 400; border-top: 1px solid #dee2e6; border-bottom: 1.500px solid #33373b; text-align: left; white-space: nowrap; }
th div { display: flex; justify-content: space-between; align-items: center; }
th svg { width: 10px; height: 10px; margin-top: -4px; stroke: #c4c6c9; stroke-width: .9; }
td { height: 59px; padding: 6px; vertical-align: top; border-bottom: 1px solid #dee2e6; line-height: 15px; white-space: nowrap; }
tbody tr:nth-child(even) td { height: 58px; padding-bottom: 5px; }
tbody tr:nth-child(odd) td { background: #e5e5e5; }
.av { width: 46px; height: 46px; color: #000; }
.acts { display: flex; gap: 3px; }
button { width: 30px; height: 28px; padding: 0 0 2px; border: 1px solid #5f6265; border-radius: 4px; background: transparent; display: flex; align-items: center; justify-content: center; color: #000; }
button.cog { width: 32px; }
button svg { width: 13px; height: 11px; }
.foot { display: flex; justify-content: space-between; padding-top: 5px; }
.foot > span { line-height: 29px; }
.pager { display: flex; height: 23px; width: 139px; border: 1px solid #dee2e6; border-radius: 3px; line-height: 22px; color: #7c858e; text-align: center; }
.prev { width: 53px; }
.cur { width: 25px; background: #0d6efd; color: #fff; margin: -1px 0; line-height: 24px; }
.next { flex: 1; }

/* taskbar */
.taskbar { margin-top: auto; height: 32px; flex: none; background: linear-gradient(90deg, #20373f 0%, #20343f 45%, #1b2a44 85%, #1a2946 100%); display: flex; align-items: stretch; color: #fff; }
.start { width: 38px; display: flex; align-items: center; justify-content: center; }
.start svg { width: 13px; height: 13px; }
.find { width: 276px; background: #f1f1f1; border: 1px solid #bfc3c4; display: flex; align-items: center; padding-left: 9px; color: #454545; font-size: 11.700px; letter-spacing: -.23px; }
.find svg { width: 14px; height: 14px; margin-right: 8px; }
.apps { display: flex; }
.apps div { width: 39.200px; display: flex; align-items: center; justify-content: center; border-bottom: 2px solid transparent; padding-top: 2px; }
.apps .run { border-bottom-color: #79aee0; width: 32px; margin: 0 3.600px; }
.apps .active { background: #506269; border-bottom-color: #79aee0; width: 37px; margin: 0 1px; }
.s14 { width: 14px; height: 14px; }
.s18 { width: 18px; height: 18px; }
.s19 { width: 19px; height: 19px; }
.s20 { width: 20px; height: 20px; }
.tray { margin-left: auto; display: flex; align-items: center; padding-right: 3px; }
.tray::after { content: ""; width: 1px; height: 32px; background: #66738a; margin-left: 8px; }
.up { width: 10px; height: 6px; margin-right: 7px; }
.drop { width: 13px; height: 12px; margin-right: 6px; }
.net { width: 13px; height: 12px; margin-right: 6px; }
.vol { width: 13px; height: 12px; margin-right: 10px; }
.lang { font-size: 9.300px; letter-spacing: -.3px; width: 16px; }
.clock { width: 50px; margin-left: 10px; font-size: 9.300px; letter-spacing: -.3px; line-height: 14px; text-align: center; white-space: nowrap; }
.notif { margin-left: 12px; width: 21px; height: 18px; position: relative; }
.notif svg { width: 14px; height: 13px; }
.notif b { position: absolute; left: 5px; top: 5px; width: 15px; height: 14px; border-radius: 7px; background: #3e4754; border: 1px solid #7f8791; font-size: 8.500px; line-height: 12px; text-align: center; font-weight: 600; letter-spacing: -.2px; }
```
